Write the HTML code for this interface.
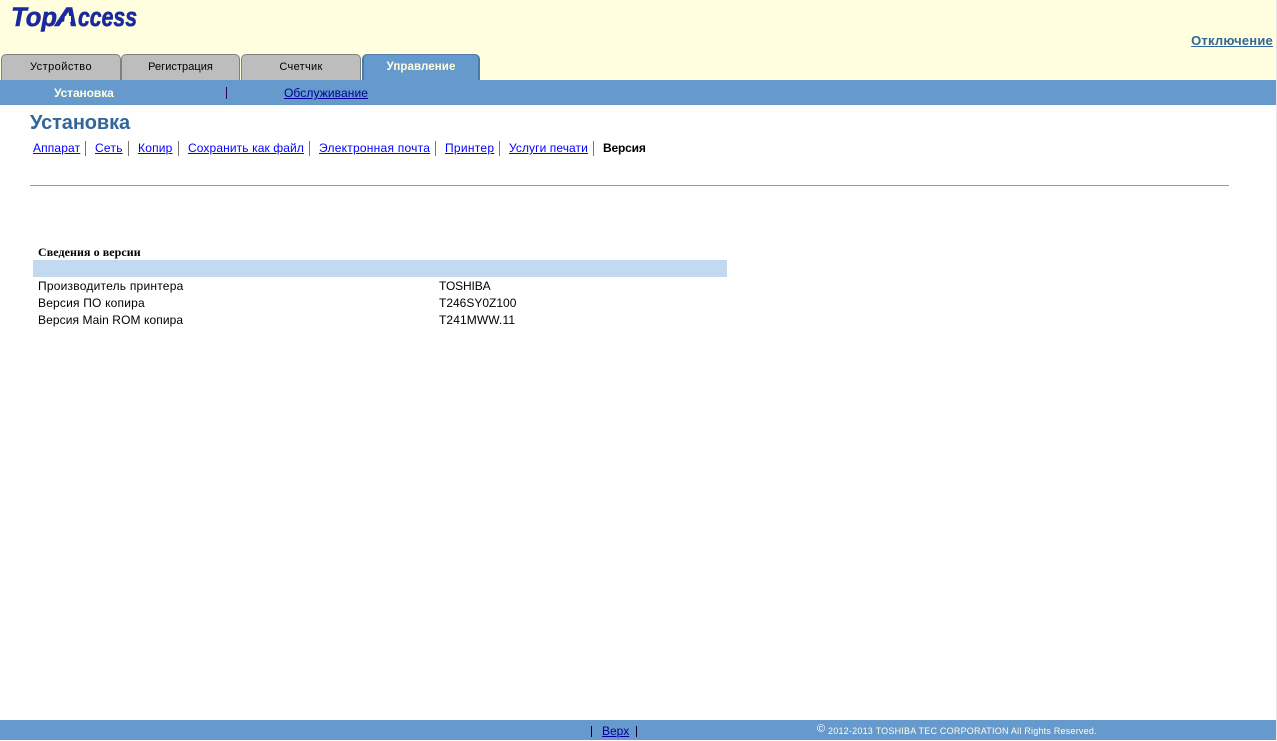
<!DOCTYPE html>
<html><head><meta charset="utf-8"><title>TopAccess</title>
<style>
html,body{margin:0;padding:0;width:1277px;height:741px;overflow:hidden;background:#fff;font-family:"Liberation Sans",Arial,sans-serif;font-size:12px;color:#000}
.a{position:absolute;white-space:nowrap;line-height:14px}
a{color:#00f;text-decoration:underline}
.tab{position:absolute;top:54px;height:26px;box-sizing:border-box;background:#bdbdbd;border:1px solid #808080;border-bottom:0;border-radius:5px 5px 0 0;text-align:center;font-size:11px;line-height:25px;color:#000}
.sep{position:absolute;top:141px;width:1px;height:15px;background:#777}
.l{position:absolute;top:141px;line-height:14px;white-space:nowrap;color:#00f;text-decoration:underline}
</style></head><body>
<div style="position:absolute;left:0;top:0;width:1276px;height:80px;background:#ffffe0"></div>
<svg style="position:absolute;left:0;top:0" width="150" height="34" font-family="Liberation Sans" font-size="27" font-weight="bold" font-style="italic" fill="#1a2a9e" stroke="#1a2a9e" stroke-width=".6">
<text x="11" y="26" textLength="46" lengthAdjust="spacingAndGlyphs">Top</text>
<text x="55" y="26" textLength="23" lengthAdjust="spacingAndGlyphs">A</text>
<text x="78" y="26" textLength="59" lengthAdjust="spacingAndGlyphs">ccess</text>
<polygon points="65,16 71,16 71,22 64,22" fill="#ffffe0" stroke="none"/>
</svg>
<a class="a" style="right:4px;top:34px;font-size:13px;font-weight:bold;color:#336699;letter-spacing:.2px">Отключение</a>
<div class="tab" style="left:1px;width:120px;letter-spacing:.45px">Устройство</div>
<div class="tab" style="left:121px;width:119px;letter-spacing:.05px">Регистрация</div>
<div class="tab" style="left:241px;width:120px;letter-spacing:.3px">Счетчик</div>
<div class="tab" style="left:362px;width:118px;background:#6699cc;border-color:#4d7ba8;border-width:1px 2px 0;color:#ffffe0;font-weight:bold;font-size:11.5px;letter-spacing:.1px">Управление</div>
<div style="position:absolute;left:0;top:80px;width:1276px;height:25px;background:#6699cc"></div>
<div class="a" style="left:54px;top:86px;color:#ffffe0;font-weight:bold;letter-spacing:-.1px">Установка</div>
<div style="position:absolute;left:226px;top:87px;width:1px;height:12px;background:#330066"></div>
<a class="a" style="left:284px;top:86px;color:#000099;letter-spacing:.1px">Обслуживание</a>
<div class="a" style="left:30px;top:111px;line-height:23px;font-size:20px;font-weight:bold;color:#336699;letter-spacing:-.1px;padding-top:1px">Установка</div>
<a class="l" style="left:33px;letter-spacing:.14px">Аппарат</a><div class="sep" style="left:85px"></div>
<a class="l" style="left:95px;letter-spacing:.25px">Сеть</a><div class="sep" style="left:128px"></div>
<a class="l" style="left:138px;letter-spacing:.2px">Копир</a><div class="sep" style="left:178px"></div>
<a class="l" style="left:188px;letter-spacing:.11px">Сохранить как файл</a><div class="sep" style="left:309px"></div>
<a class="l" style="left:319px;letter-spacing:.24px">Электронная почта</a><div class="sep" style="left:435px"></div>
<a class="l" style="left:445px;letter-spacing:.28px">Принтер</a><div class="sep" style="left:499px"></div>
<a class="l" style="left:509px;letter-spacing:.08px">Услуги печати</a><div class="sep" style="left:593px"></div>
<div class="a" style="left:603px;top:141px;font-weight:bold;letter-spacing:-.17px">Версия</div>
<div style="position:absolute;left:30px;top:185px;width:1199px;height:1px;background:#999"></div>
<div class="a" style="left:38px;top:245px;font-family:'Liberation Serif',serif;font-weight:bold;letter-spacing:.06px">Сведения о версии</div>
<div style="position:absolute;left:33px;top:260px;width:694px;height:17px;background:#c2d9ef"></div>
<div class="a" style="left:38px;top:279px;letter-spacing:.22px">Производитель принтера</div>
<div class="a" style="left:439px;top:279px;letter-spacing:-.14px">TOSHIBA</div>
<div class="a" style="left:38px;top:296px;letter-spacing:.19px">Версия ПО копира</div>
<div class="a" style="left:439px;top:296px">T246SY0Z100</div>
<div class="a" style="left:38px;top:313px;letter-spacing:.09px">Версия Main ROM копира</div>
<div class="a" style="left:439px;top:313px;letter-spacing:.1px">T241MWW.11</div>
<div style="position:absolute;left:0;top:720px;width:1276px;height:20px;background:#6699cc"></div>
<div style="position:absolute;left:591px;top:726px;width:1px;height:11px;background:#003"></div>
<a class="a" style="left:602px;top:724px;color:#000099">Верх</a>
<div style="position:absolute;left:636px;top:726px;width:1px;height:11px;background:#003"></div>
<div class="a" style="left:817px;top:723px;color:#fff;font-size:9px"><span style="font-size:11px;position:relative;top:-1px">©</span></div>
<div class="a" style="left:828px;top:724px;color:#ffffe8;font-size:9px;letter-spacing:.22px">2012-2013 TOSHIBA TEC CORPORATION All Rights Reserved.</div>
<div style="position:absolute;left:1276px;top:0;width:1px;height:741px;background:#e6e6e6"></div>
</body></html>
